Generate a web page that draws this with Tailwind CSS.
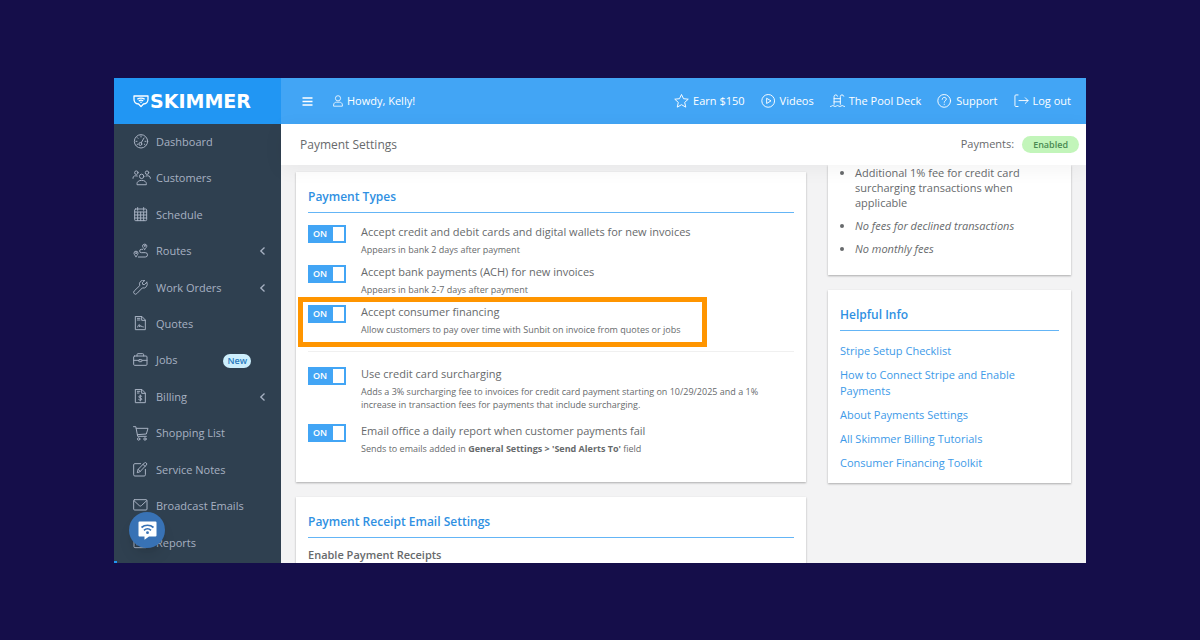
<!DOCTYPE html>
<html lang="en">
<head>
    <meta charset="UTF-8">
    <meta name="viewport" content="width=device-width, initial-scale=1.0">
    <title>Payment Settings</title>
    <script src="https://cdn.jsdelivr.net/npm/@tailwindcss/browser@4"></script>
</head>
<body class="bg-[#150e4a] font-['Open_Sans',sans-serif] text-[11px] text-[#676a6c]">
    <div class="h-screen px-[114px] pt-[78px] pb-[77px]">
        <div class="relative flex h-full overflow-hidden bg-[#f3f3f4]">

            <!-- Sidebar -->
            <aside class="flex w-[167px] shrink-0 flex-col bg-[#2f4050]">
                <a href="#" class="flex h-[46px] shrink-0 items-center gap-px bg-[#2196f3] pl-[19px] text-white">
                    <svg class="h-[13px] w-4" viewBox="0 0 16 13" fill="none" stroke="currentColor" stroke-width="1.3">
                        <path d="M1 1h14v3.2c0 2.8-2.2 4.6-4.6 4.8L8 11.6 5.600 9C3.200 8.800 1 7 1 4.200z" stroke-linejoin="round"/>
                        <path d="M4.300 4.300c2-1.700 5.400-1.700 7.400 0M5.800 6c1.200-1 3.200-1 4.400 0"/>
                        <circle cx="8" cy="7.300" r=".8" fill="currentColor" stroke="none"/>
                    </svg>
                    <span class="font-['DejaVu_Sans',sans-serif] text-[19px] leading-none font-bold">SKIMMER</span>
                </a>
                <nav class="min-h-0 flex-1 pb-0.5">
                    <ul class="flex h-full flex-col text-[#a7b1c2]">
                        <li class="flex-1">
                            <a href="#" class="flex h-full items-center gap-[7px] pl-[19px]">
                                <svg class="h-4 w-4" viewBox="0 0 24 24" fill="none" stroke="currentColor" stroke-width="1.5" stroke-linecap="round" stroke-linejoin="round"><circle cx="12" cy="11" r="10"/><circle cx="11" cy="15" r="2.200"/><path d="M12.300 13.200 16.500 6M12 3v1.500M6.500 5.500l1 1M4.500 11H6M18 11h1.500M6 16l1-.8M18 16l-1-.8"/></svg>
                                Dashboard
                            </a>
                        </li>
                        <li class="flex-1">
                            <a href="#" class="flex h-full items-center gap-[7px] pl-[19px]">
                                <svg class="h-4 w-4 overflow-visible" viewBox="0 0 24 24" fill="none" stroke="currentColor" stroke-width="1.5" stroke-linecap="round" stroke-linejoin="round"><circle cx="5" cy="2.500" r="2.600"/><circle cx="21" cy="2.500" r="2.600"/><circle cx="13" cy="8" r="3.300"/><path d="M6 20v-1c0-3 3-5 7-5s7 2 7 5v1zM0 11v-.5c0-3 3-4 6.500-3M26 11v-.5c0-3-3-4-6.500-3"/></svg>
                                Customers
                            </a>
                        </li>
                        <li class="flex-1">
                            <a href="#" class="flex h-full items-center gap-[7px] pl-[19px]">
                                <svg class="h-4 w-4" viewBox="0 0 24 24" fill="none" stroke="currentColor" stroke-width="1.5" stroke-linecap="round" stroke-linejoin="round"><rect x="2.500" y="3" width="18" height="17.500" rx="1.500"/><path d="M2.500 7.500h18M2.500 12h18M2.500 16.500h18M7 7.500v13M11.500 7.500v13M16 7.500v13M7 .8V5M16 .8V5"/></svg>
                                Schedule
                            </a>
                        </li>
                        <li class="flex-1">
                            <a href="#" class="flex h-full items-center gap-[7px] pr-[15px] pl-[19px]">
                                <svg class="h-4 w-4" viewBox="0 0 24 24" fill="none" stroke="currentColor" stroke-width="1.500" stroke-linecap="round" stroke-linejoin="round"><path d="M17.500 9.500c2-2.300 3.300-3.700 3.300-5.200a3.400 3.400 0 0 0-6.600 0c0 1.500 1.300 2.900 3.300 5.200z"/><circle cx="17.500" cy="4.300" r=".8"/><path d="M4.500 20.500c2-2.500 3-3.800 3-5.200a3 3 0 0 0-6 0c0 1.400 1 2.700 3 5.200z"/><circle cx="4.500" cy="15.200" r=".7"/><path d="M14.500 9.500h-2a2.500 2.500 0 0 0 0 5H18.500a3 3 0 0 1 0 6.500H8"/></svg>
                                <span class="flex-1">Routes</span>
                                <svg class="h-2 w-[7px]" viewBox="0 0 7 8" fill="none" stroke="currentColor" stroke-width="1.300"><path d="M5.500.5 1.800 4l3.700 3.500"/></svg>
                            </a>
                        </li>
                        <li class="flex-1">
                            <a href="#" class="flex h-full items-center gap-[7px] pr-[15px] pl-[19px]">
                                <svg class="h-4 w-4" viewBox="0 0 24 24" fill="none" stroke="currentColor" stroke-width="1.500" stroke-linecap="round" stroke-linejoin="round"><path d="M20.800 3.500 17 7l-2.500-.5L14 4l3.700-3.200a5.700 5.700 0 0 0-7.500 7.500L1.800 16.500a2.700 2.700 0 0 0 3.900 3.900l8.300-8.500a5.900 5.900 0 0 0 6.800-8.400z"/></svg>
                                <span class="flex-1">Work Orders</span>
                                <svg class="h-2 w-[7px]" viewBox="0 0 7 8" fill="none" stroke="currentColor" stroke-width="1.300"><path d="M5.500.5 1.800 4l3.700 3.500"/></svg>
                            </a>
                        </li>
                        <li class="flex-1">
                            <a href="#" class="flex h-full items-center gap-[7px] pl-[19px]">
                                <svg class="h-4 w-4" viewBox="0 0 24 24" fill="none" stroke="currentColor" stroke-width="1.500" stroke-linecap="round" stroke-linejoin="round"><path d="M4.500.8h9L18.500 6v14.500h-15V.8zM13 1v5.500h5.500M6.500 3.500h4M6.500 6h4M7 16.500c2-5 3-5 3 0 1.500-3 2-3 2.500-.5 1-1 1.500.5 3 .5"/></svg>
                                Quotes
                            </a>
                        </li>
                        <li class="flex-1">
                            <a href="#" class="flex h-full items-center gap-[7px] pr-[30px] pl-[19px]">
                                <svg class="h-4 w-4" viewBox="0 0 24 24" fill="none" stroke="currentColor" stroke-width="1.500" stroke-linecap="round" stroke-linejoin="round"><rect x="1" y="4.500" width="20" height="14" rx="1.500"/><path d="M6 4.500V2.500A1.500 1.500 0 0 1 7.500 1h7A1.500 1.500 0 0 1 16 2.500v2M1 11h7.500M13.500 11H21"/><rect x="8.500" y="10" width="5" height="3" rx="1"/></svg>
                                <span class="flex-1">Jobs</span>
                                <span class="rounded-full bg-[#cdeffd] px-1 text-[9px] leading-[14px] font-semibold text-[#2a7cc0]">New</span>
                            </a>
                        </li>
                        <li class="flex-1">
                            <a href="#" class="flex h-full items-center gap-[7px] pr-[15px] pl-[19px]">
                                <svg class="h-4 w-4" viewBox="0 0 24 24" fill="none" stroke="currentColor" stroke-width="1.500" stroke-linecap="round" stroke-linejoin="round"><path d="M4.500.8h9L18.500 6v14.500h-15V.8zM13 1v5.500h5.500M6.500 3.500h4M6.500 6h2.500M13.300 11c-1-1.200-4.600-1.200-4.600.8 0 2.100 4.600 1.300 4.600 3.400 0 1.900-3.700 1.900-4.800.7M11 9v9"/></svg>
                                <span class="flex-1">Billing</span>
                                <svg class="h-2 w-[7px]" viewBox="0 0 7 8" fill="none" stroke="currentColor" stroke-width="1.300"><path d="M5.500.5 1.800 4l3.700 3.500"/></svg>
                            </a>
                        </li>
                        <li class="flex-1">
                            <a href="#" class="flex h-full items-center gap-[7px] pl-[19px]">
                                <svg class="h-4 w-4" viewBox="0 0 24 24" fill="none" stroke="currentColor" stroke-width="1.500" stroke-linecap="round" stroke-linejoin="round"><path d="M.8 1h3.400L7 15.500h13M4.800 3.500H22.500l-2.500 8.500L6.500 13"/><circle cx="8.500" cy="19.500" r="1.800"/><circle cx="18" cy="19.500" r="1.800"/></svg>
                                Shopping List
                            </a>
                        </li>
                        <li class="flex-1">
                            <a href="#" class="flex h-full items-center gap-[7px] pl-[19px]">
                                <svg class="h-4 w-4" viewBox="0 0 24 24" fill="none" stroke="currentColor" stroke-width="1.500" stroke-linecap="round" stroke-linejoin="round"><path d="M11.500 2.500H2.800A1.800 1.800 0 0 0 1 4.300v14.900A1.800 1.800 0 0 0 2.800 21h14a1.800 1.800 0 0 0 1.800-1.800V11"/><path d="m6.500 15.500 1.200-4.500L17 1.500a2 2 0 0 1 3 0 2 2 0 0 1 0 3L10.800 14.200zM15 3.500l3 3M7.700 11l3.100 3.200"/></svg>
                                Service Notes
                            </a>
                        </li>
                        <li class="flex-1">
                            <a href="#" class="flex h-full items-center gap-[7px] pl-[19px]">
                                <svg class="h-4 w-4" viewBox="0 0 24 24" fill="none" stroke="currentColor" stroke-width="1.500" stroke-linecap="round" stroke-linejoin="round"><rect x="1" y="2.500" width="20" height="15.500" rx="1.500"/><path d="m1.500 4 8 7.500a2.300 2.300 0 0 0 3 0L20.500 4"/></svg>
                                Broadcast Emails
                            </a>
                        </li>
                        <li class="flex-1">
                            <a href="#" class="flex h-full items-center gap-[7px] pl-[19px]">
                                <svg class="h-4 w-4" viewBox="0 0 24 24" fill="none" stroke="currentColor" stroke-width="1.500" stroke-linecap="round" stroke-linejoin="round"><rect x="1.500" y="2" width="19" height="17" rx="1.500"/><path d="M6 15v-4M11 15V6M16 15V9"/></svg>
                                Reports
                            </a>
                        </li>
                    </ul>
                </nav>
            </aside>

            <div class="flex min-w-0 flex-1 flex-col">
                <!-- Top bar -->
                <header class="flex h-[46px] shrink-0 items-center bg-[#42a5f5] pr-[15px] pl-[21px] text-white">
                    <button type="button" aria-label="Toggle menu">
                        <svg class="h-[9px] w-[11px]" viewBox="0 0 11 9" fill="none" stroke="currentColor" stroke-width="1.400"><path d="M.5 1h10M.5 4.500h10M.5 8h10"/></svg>
                    </button>
                    <a href="#" class="ml-5 flex items-center gap-1">
                        <svg class="h-3 w-[10px]" viewBox="0 0 10 12" fill="none" stroke="currentColor" stroke-width=".8"><circle cx="5" cy="3.300" r="2.600"/><path d="M.6 11.200V10c0-2 1.500-2.800 3-2.800h2.800c1.500 0 3 .8 3 2.800v1.200z"/></svg>
                        Howdy, Kelly!
                    </a>
                    <div class="ml-auto flex items-center gap-4">
                        <a href="#" class="flex items-center gap-1">
                            <svg class="h-[15px] w-[15px]" viewBox="0 0 24 24" fill="none" stroke="currentColor" stroke-width="1.500" stroke-linejoin="round"><path d="m12 .8 3.200 6.700 7.600.8-5.700 5.100 1.700 7.600-6.800-3.900L5.200 21l1.700-7.600L1.200 8.300l7.600-.8z"/></svg>
                            Earn $150
                        </a>
                        <a href="#" class="flex items-center gap-1">
                            <svg class="h-[15px] w-[15px]" viewBox="0 0 24 24" fill="none" stroke="currentColor" stroke-width="1.500" stroke-linejoin="round"><circle cx="11.500" cy="11" r="10.200"/><path d="M9 6.800v8.400l7-4.200z"/></svg>
                            Videos
                        </a>
                        <a href="#" class="flex items-center gap-1">
                            <svg class="h-[15px] w-[15px]" viewBox="0 0 24 24" fill="none" stroke="currentColor" stroke-width="1.500" stroke-linecap="round"><path d="M6.500 16.500V4a2.800 2.800 0 0 1 5.500-.5M16.500 16.500V4A2.800 2.800 0 0 1 22 3.500M6.500 7.500h10M6.500 12.500h10M.8 20c2 0 2-1.500 3.700-1.500S6.500 20 8.200 20s2-1.500 3.800-1.500 2 1.500 3.800 1.500 2-1.500 3.700-1.500 1.700 1.500 3.700 1.500"/></svg>
                            The Pool Deck
                        </a>
                        <a href="#" class="flex items-center gap-1">
                            <svg class="h-[15px] w-[15px]" viewBox="0 0 24 24" fill="none" stroke="currentColor" stroke-width="1.500" stroke-linecap="round"><circle cx="11.500" cy="11" r="10.200"/><path d="M8.300 8.500c0-4.300 6.600-4 6.600-.3 0 2.500-3.300 2.500-3.300 5M11.600 16.300v.4"/></svg>
                            Support
                        </a>
                        <a href="#" class="flex items-center gap-1">
                            <svg class="h-[15px] w-[15px]" viewBox="0 0 24 24" fill="none" stroke="currentColor" stroke-width="1.500" stroke-linecap="round" stroke-linejoin="round"><path d="M6.500 1.500H3A1.500 1.500 0 0 0 1.500 3v15.500A1.500 1.500 0 0 0 3 20h3.500M8 10.500h14.500M18 6l4.500 4.500L18 15"/></svg>
                            Log out
                        </a>
                    </div>
                </header>

                <!-- Page heading -->
                <div class="z-10 flex h-[41px] shrink-0 items-center bg-white pr-[7px] pl-[19px] shadow-[0_4px_20px_rgba(0,0,0,0.05)]">
                    <h1 class="text-[12px]">Payment Settings</h1>
                    <span class="ml-auto">Payments:</span>
                    <span class="ml-2 rounded-full bg-[#c2f5ba] px-[11px] text-[9px] leading-[17px] font-semibold text-[#4a8a52]">Enabled</span>
                </div>

                <main class="flex min-h-0 flex-1 items-start gap-[22px] overflow-hidden pr-[15px] pl-[15px]">
                    <div class="min-w-0 flex-1 pt-[7px]">
                        <!-- Payment types -->
                        <section class="bg-white px-3 pt-4 pb-[27px] shadow-[0_1px_2px_rgba(0,0,0,0.3)]">
                            <h2 class="border-b border-[#64b5f6] pb-1.5 text-[12px] leading-[18px] font-semibold text-[#2f90e2]">Payment Types</h2>
                            <div class="mt-2.5 flex flex-col gap-[7px]">
                                <div class="flex items-start gap-[15px]">
                                    <label class="mt-0.5 flex h-[18px] w-[38px] shrink-0 items-center justify-between bg-[#42a5f5] pr-0.5 pl-[5px] text-[9px] font-semibold text-white">
                                        <input type="checkbox" id="cards" class="sr-only" checked>ON
                                        <span class="h-[14px] w-[11px] bg-white"></span>
                                    </label>
                                    <div>
                                        <label for="cards" class="block leading-[18px]">Accept credit and debit cards and digital wallets for new invoices</label>
                                        <p class="mt-0.5 text-[9px] leading-[13px]">Appears in bank 2 days after payment</p>
                                    </div>
                                </div>
                                <div class="flex items-start gap-[15px]">
                                    <label class="mt-0.5 flex h-[18px] w-[38px] shrink-0 items-center justify-between bg-[#42a5f5] pr-0.5 pl-[5px] text-[9px] font-semibold text-white">
                                        <input type="checkbox" id="ach" class="sr-only" checked>ON
                                        <span class="h-[14px] w-[11px] bg-white"></span>
                                    </label>
                                    <div>
                                        <label for="ach" class="block leading-[18px]">Accept bank payments (ACH) for new invoices</label>
                                        <p class="mt-0.5 text-[9px] leading-[13px]">Appears in bank 2-7 days after payment</p>
                                    </div>
                                </div>
                                <div class="relative flex items-start gap-[15px]">
                                    <!-- highlight frame -->
                                    <div class="pointer-events-none absolute -top-1.5 -left-2.5 h-[50px] w-[409px] border-[5px] border-[#ff9500]"></div>
                                    <label class="mt-0.5 flex h-[18px] w-[38px] shrink-0 items-center justify-between bg-[#42a5f5] pr-0.5 pl-[5px] text-[9px] font-semibold text-white">
                                        <input type="checkbox" id="financing" class="sr-only" checked>ON
                                        <span class="h-[14px] w-[11px] bg-white"></span>
                                    </label>
                                    <div>
                                        <label for="financing" class="block leading-[18px]">Accept consumer financing</label>
                                        <p class="mt-0.5 text-[9px] leading-[13px]">Allow customers to pay over time with Sunbit on invoice from quotes or jobs</p>
                                    </div>
                                </div>
                            </div>
                            <div class="mt-[15px] flex flex-col gap-[11px] border-t border-[#f0f0f0] pt-[13px]">
                                <div class="flex items-start gap-[15px]">
                                    <label class="mt-0.5 flex h-[18px] w-[38px] shrink-0 items-center justify-between bg-[#42a5f5] pr-0.5 pl-[5px] text-[9px] font-semibold text-white">
                                        <input type="checkbox" id="surcharge" class="sr-only" checked>ON
                                        <span class="h-[14px] w-[11px] bg-white"></span>
                                    </label>
                                    <div>
                                        <label for="surcharge" class="block leading-[18px]">Use credit card surcharging</label>
                                        <p class="mt-0.5 text-[9px] leading-[13px]">Adds a 3% surcharging fee to invoices for credit card payment starting on 10/29/2025 and a 1%<br>increase in transaction fees for payments that include surcharging.</p>
                                    </div>
                                </div>
                                <div class="flex items-start gap-[15px]">
                                    <label class="mt-0.5 flex h-[18px] w-[38px] shrink-0 items-center justify-between bg-[#42a5f5] pr-0.5 pl-[5px] text-[9px] font-semibold text-white">
                                        <input type="checkbox" id="report" class="sr-only" checked>ON
                                        <span class="h-[14px] w-[11px] bg-white"></span>
                                    </label>
                                    <div>
                                        <label for="report" class="block leading-[18px]">Email office a daily report when customer payments fail</label>
                                        <p class="mt-0.5 text-[9px] leading-[13px]">Sends to emails added in <b>General Settings &gt; 'Send Alerts To'</b> field</p>
                                    </div>
                                </div>
                            </div>
                        </section>

                        <!-- Receipt emails -->
                        <section class="mt-[15px] bg-white px-3 pt-4 pb-[27px] shadow-[0_1px_2px_rgba(0,0,0,0.3)]">
                            <h2 class="border-b border-[#64b5f6] pb-1.5 text-[12px] leading-[18px] font-semibold text-[#2f90e2]">Payment Receipt Email Settings</h2>
                            <h3 class="mt-2 leading-[18px] font-semibold">Enable Payment Receipts</h3>
                        </section>
                    </div>

                    <div class="w-[243px] shrink-0">
                        <!-- Fees -->
                        <section class="bg-white px-3 pb-[19px] shadow-[0_1px_2px_rgba(0,0,0,0.3)]">
                            <ul class="list-disc space-y-2 pl-[15px] leading-[15px]">
                                <li>Additional 1% fee for credit card surcharging transactions when applicable</li>
                                <li class="italic">No fees for declined transactions</li>
                                <li class="italic">No monthly fees</li>
                            </ul>
                        </section>

                        <!-- Help links -->
                        <section class="mt-[15px] bg-white px-3 pt-4 pb-3 shadow-[0_1px_2px_rgba(0,0,0,0.3)]">
                            <h2 class="border-b border-[#64b5f6] pb-1.5 text-[12px] leading-[18px] font-semibold text-[#2f90e2]">Helpful Info</h2>
                            <ul class="mt-3 space-y-2 leading-4 text-[#3d9ae8]">
                                <li><a href="#">Stripe Setup Checklist</a></li>
                                <li><a href="#">How to Connect Stripe and Enable Payments</a></li>
                                <li><a href="#">About Payments Settings</a></li>
                                <li><a href="#">All Skimmer Billing Tutorials</a></li>
                                <li><a href="#">Consumer Financing Toolkit</a></li>
                            </ul>
                        </section>
                    </div>
                </main>
            </div>

            <!-- Chat launcher -->
            <button type="button" aria-label="Open chat" class="absolute bottom-[15px] left-[15px] flex h-9 w-9 items-center justify-center rounded-full bg-[#3872b5] shadow-lg">
                <svg class="h-[19px] w-[19px]" viewBox="0 0 19 19" fill="none">
                    <path d="M1.500.5h16a1 1 0 0 1 1 1v13a1 1 0 0 1-1 1H11l-4.500 3.200v-3.200h-5a1 1 0 0 1-1-1v-13a1 1 0 0 1 1-1z" fill="#fff"/>
                    <path d="M3.500 6.500c3.400-3 8.600-3 12 0M6 9.300c2-1.800 5-1.800 7 0" stroke="#3872b5" stroke-width="1.700"/>
                    <circle cx="9.500" cy="11.700" r="1.400" fill="#3872b5"/>
                </svg>
            </button>
            <div class="absolute bottom-0 left-0 h-0.5 w-[3px] bg-[#2196f3]"></div>
        </div>
    </div>
</body>
</html>
